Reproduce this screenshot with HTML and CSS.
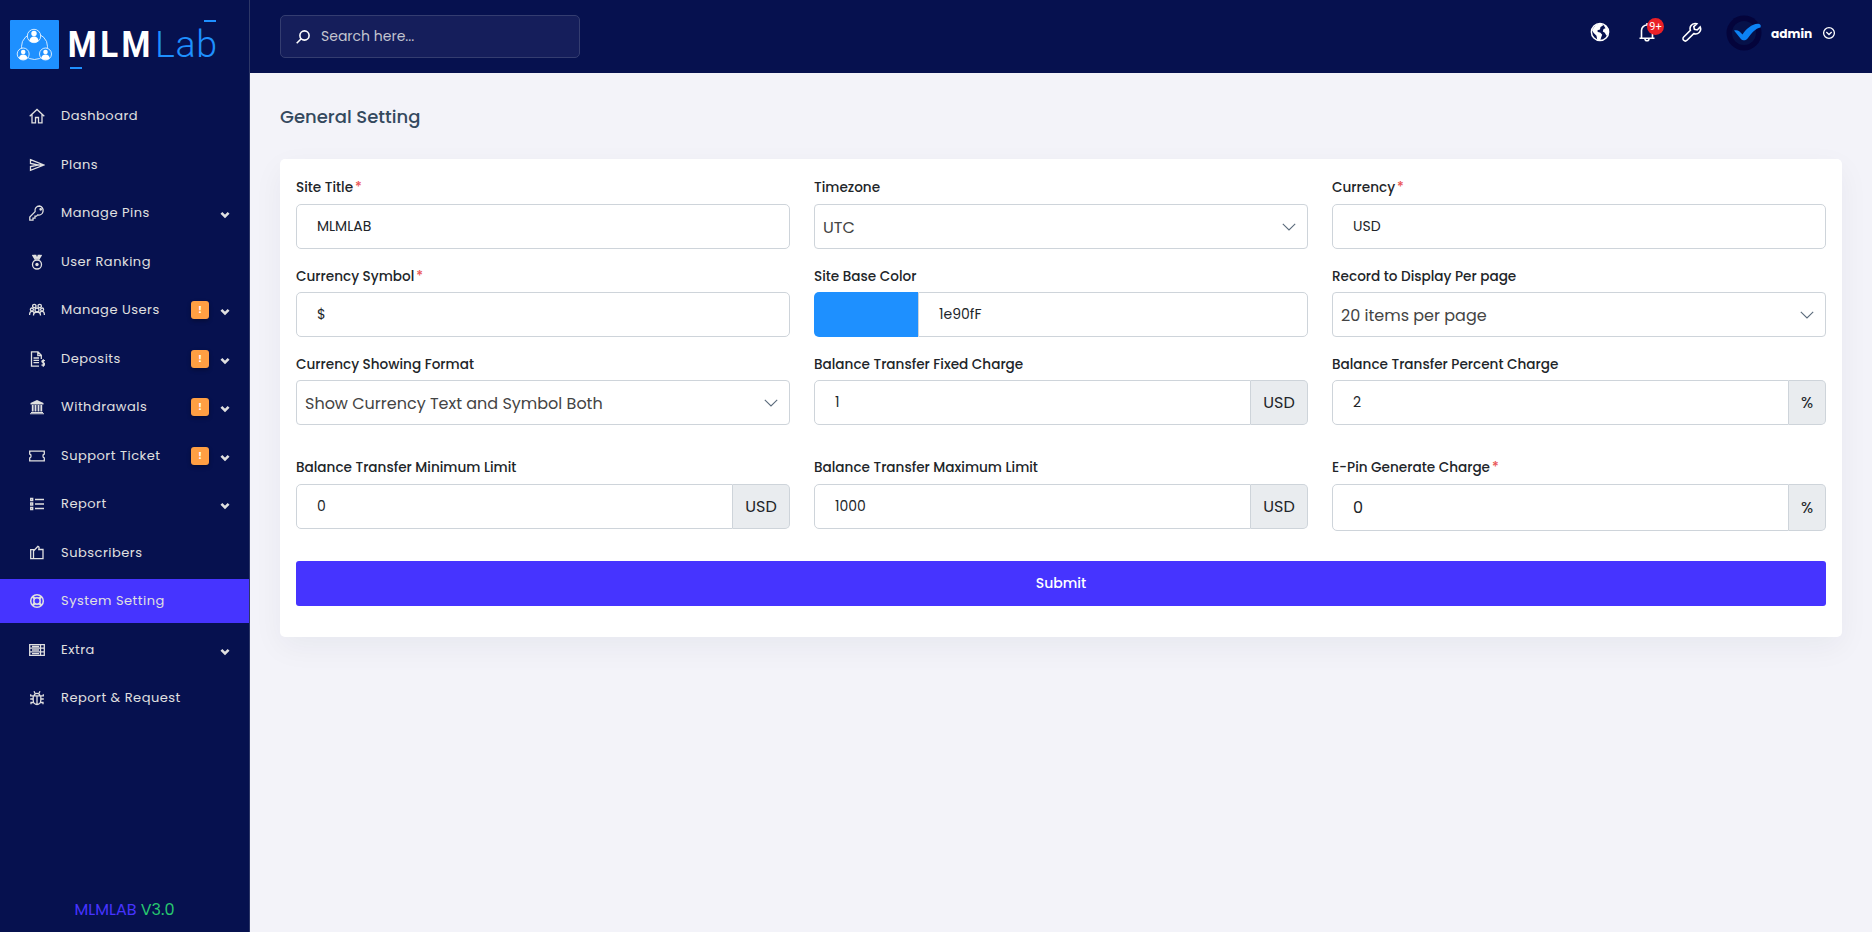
FILE: index.html
```
<!DOCTYPE html>
<html lang="en">
<head>
    <meta charset="UTF-8">
    <title>MLMLab - General Setting</title>
    <link rel="stylesheet" href="styles.css">
</head>
<body>
<svg class="sprite" aria-hidden="true">
    <symbol id="chevron" viewBox="0 0 10 8"><path d="M1.4 1.9 5 5.5l3.6-3.6" fill="none" stroke="currentColor" stroke-width="2.6"/></symbol>
    <symbol id="arrow" viewBox="0 0 14 8"><path d="M.8.8 7 7 13.2.8" fill="none" stroke="currentColor" stroke-width="1.1"/></symbol>
</svg>

<aside class="sidebar">
    <a class="logo" href="#">
        <svg width="210" height="52" viewBox="0 0 210 52">
            <rect x="0" y="2" width="49" height="49" rx="1" fill="#1e90ff"/>
            <g fill="none" stroke="#fff" stroke-width=".8">
                <circle cx="24.5" cy="28.5" r="13"/>
                <circle cx="24" cy="18" r="6.7" fill="#1e90ff"/>
                <circle cx="13.2" cy="36" r="6" fill="#1e90ff"/>
                <circle cx="35.5" cy="36" r="6" fill="#1e90ff"/>
            </g>
            <g fill="#fff">
                <circle cx="24" cy="15.5" r="2.7"/><path d="M19.5 23c0-3 2-4.500 4.500-4.500s4.500 1.500 4.500 4.500c-2.500 2-6.500 2-9 0z"/>
                <circle cx="13.2" cy="34" r="2.3"/><path d="M9 40.500c0-2.700 2-4 4.200-4s4.200 1.300 4.200 4c-2.400 1.800-6 1.800-8.400 0z"/>
                <circle cx="35.5" cy="34" r="2.3"/><path d="M31.300 40.500c0-2.700 2-4 4.200-4s4.200 1.300 4.200 4c-2.400 1.800-6 1.800-8.400 0z"/>
            </g>
            <text class="logo-bold" transform="translate(57.8 39.3) scale(.88 1)">MLM</text>
            <text class="logo-thin" x="145" y="39.3" textLength="62" lengthAdjust="spacing">Lab</text>
            <path d="M194 2h12v2h-12zM60 49h12v2H60z" fill="#1e90ff"/>
        </svg>
    </a>
    <nav class="menu">
        <a class="menu-item" href="#">
            <svg class="icon" viewBox="0 0 16 16"><path d="M.7 8.200 8 1.500l7.300 6.700M3 6.500v8.300h3.500V9.500h3v5.300H13V6.500"/></svg>
            <span>Dashboard</span>
        </a>
        <a class="menu-item" href="#">
            <svg class="icon" viewBox="0 0 16 16"><path d="M1.500 2.700 14.800 8 1.500 13.300V9.500L9 8 1.500 6.500zM9 8h5"/></svg>
            <span>Plans</span>
        </a>
        <a class="menu-item" href="#">
            <svg class="icon" viewBox="0 0 16 16"><path d="M10.500 1a4.500 4.500 0 0 0-4.400 5.600L.8 12v3.200H4v-2h2v-2h1.500l1.200-1.300A4.500 4.500 0 1 0 10.500 1z"/><circle cx="11.7" cy="4.3" r=".7"/></svg>
            <span>Manage Pins</span>
            <svg class="chevron"><use href="#chevron"/></svg>
        </a>
        <a class="menu-item" href="#">
            <svg class="icon" viewBox="0 0 16 16"><path d="m3.500.8 3 5M6.500.8 8 5 9.500.8M12.500.8l-3 5M5 .8l2 4M11 .8l-2 4"/><circle cx="8" cy="10.5" r="4.5"/><circle class="solid" cx="8" cy="10.5" r="1.7"/></svg>
            <span>User Ranking</span>
        </a>
        <a class="menu-item" href="#">
            <svg class="icon" viewBox="0 0 16 16"><circle cx="5.3" cy="4" r="1.7"/><circle cx="10.7" cy="4" r="1.7"/><circle cx="2.9" cy="7.5" r="1.5"/><circle cx="13.1" cy="7.5" r="1.5"/><circle cx="8" cy="8" r="2"/><path d="M.6 13c0-2.500 1-3.700 2.300-3.700S5 10 5 11M15.400 13c0-2.500-1-3.700-2.300-3.700S11 10 11 11M4.500 13.500c0-2.500 1.500-3.500 3.500-3.500s3.500 1 3.500 3.500"/></svg>
            <span>Manage Users</span>
            <b class="alert">!</b>
            <svg class="chevron"><use href="#chevron"/></svg>
        </a>
        <a class="menu-item" href="#">
            <svg class="icon" viewBox="0 0 16 16"><path d="M10 15.200H2.500V.8H9L12.300 4.300V8M8.800.8v3.700h3.500M4.500 7h5.500M4.500 9.300H10M4.500 11.600H10"/><path d="M15.900 9.800c-1-.8-3-.6-3 .7 0 1.600 3 .9 3 2.600 0 1.300-2.200 1.500-3.400.6M14.300 8.300v7.500"/></svg>
            <span>Deposits</span>
            <b class="alert">!</b>
            <svg class="chevron"><use href="#chevron"/></svg>
        </a>
        <a class="menu-item" href="#">
            <svg class="icon" viewBox="0 0 16 16"><path class="solid" d="M8 1 1.500 4v1.500h13V4zM2 13h12v1H2zM1 14.300h14v1H1z"/><path d="M3.700 6v6.500M6.500 6v6.500M9.500 6v6.500M12.300 6v6.500" stroke-width="1.8"/></svg>
            <span>Withdrawals</span>
            <b class="alert">!</b>
            <svg class="chevron"><use href="#chevron"/></svg>
        </a>
        <a class="menu-item" href="#">
            <svg class="icon" viewBox="0 0 16 16"><path d="M.7 3.200h14.600V6C13.500 6.300 13.500 9.700 15.300 10v2.800H.7V10C2.500 9.700 2.500 6.300.7 6z"/></svg>
            <span>Support Ticket</span>
            <b class="alert">!</b>
            <svg class="chevron"><use href="#chevron"/></svg>
        </a>
        <a class="menu-item" href="#">
            <svg class="icon" viewBox="0 0 16 16"><path d="M1.700 2.500h2v2h-2zM1.700 7h2v2h-2zM1.700 11.500h2v2h-2zM6 3.500h9M6 8h9M6 12.500h9"/></svg>
            <span>Report</span>
            <svg class="chevron"><use href="#chevron"/></svg>
        </a>
        <a class="menu-item" href="#">
            <svg class="icon" viewBox="0 0 16 16"><path d="M1.700 4.700h2.800v8.900H1.700zM4.500 6 9 1.300c1.300.3 1.200 1.500.8 3.200h4.200v9.100H4.500"/></svg>
            <span>Subscribers</span>
        </a>
        <a class="menu-item active" href="#">
            <svg class="icon" viewBox="0 0 16 16"><circle cx="8" cy="8" r="6.3" stroke-width="1.5"/><circle cx="8" cy="8" r="3.2" stroke-width="1.5"/><path d="m3.500 3.500 2.200 2.200M12.500 3.500l-2.200 2.200M3.500 12.500l2.200-2.200M12.500 12.500l-2.200-2.200" stroke-width="2.4"/></svg>
            <span>System Setting</span>
        </a>
        <a class="menu-item" href="#">
            <svg class="icon" viewBox="0 0 16 16"><path d="M.7 2.700h14.600v10.600H.7zM.7 6.200h14.600M.7 9.800h14.600M3 4.500h7M3 8h7M3 11.600h7M11.500 2.700v10.600"/></svg>
            <span>Extra</span>
            <svg class="chevron"><use href="#chevron"/></svg>
        </a>
        <a class="menu-item" href="#">
            <svg class="icon" viewBox="0 0 16 16"><path d="M4.200 5.800h7.600v4.500a3.800 4.200 0 0 1-7.600 0zM5.200 5.800C5 2.500 11 2.500 10.800 5.800M5 1.200l1 2M11 1.200l-1 2M8 6v8M1.200 9h3M11.800 9h3M1.700 4.200v1.600h2.500M14.300 4.200v1.600h-2.500M2 14.200v-1.700h2.800M14 14.200v-1.700h-2.800"/></svg>
            <span>Report &amp; Request</span>
        </a>
    </nav>
    <div class="version"><span>MLMLAB</span> <span class="number">V3.0</span></div>
</aside>

<div class="page">
    <header class="topbar">
        <div class="search">
            <svg viewBox="0 0 14 14"><circle cx="8.5" cy="5.5" r="4.6"/><path d="M5.200 8.800.7 13.300"/></svg>
            <span>Search here...</span>
        </div>
        <div class="tools">
            <svg class="globe" viewBox="0 0 20 20"><circle cx="10" cy="10" r="8.6" fill="none" stroke="currentColor" stroke-width="1.5"/><path fill="currentColor" d="M6 2.500 12 1.300l1 2.200-2.500 1.500-.5 2.500-2.500.8.200 1.700 2.500.5 2 2.200-1 2.500-1 3.600-3-1.100-.7-4-3-3L2 8zM13.500 3l3 1.500L18.500 9v3l-2 1.700-1.700-3-2-1.200.7-2.500 2-.7z"/></svg>
            <div class="bell">
                <svg viewBox="0 0 20 20"><path d="M2.500 16.200h15M4.500 16V8.500a5.500 5.500 0 0 1 11 0V16M8 16.800a2 2 0 0 0 4 0M10 1v2"/></svg>
                <span class="count">9+</span>
            </div>
            <svg class="wrench" viewBox="0 0 20 20"><path d="M13 1.500a5 5 0 0 0-4.600 6.800L1.700 15a2.300 2.300 0 0 0 3.300 3.300l6.700-6.700A5 5 0 0 0 18.200 5l-3 3-2.800-.6-.6-2.800 3-2.800A5 5 0 0 0 13 1.500z"/></svg>
            <div class="user">
                <svg class="avatar" viewBox="0 0 36 36"><circle cx="18" cy="18" r="17.5" fill="#04043b"/><circle cx="18" cy="18" r="12" fill="#061149"/><path d="M8 15.500c3-1 5.500 0 8.500 4 3.500-5.500 10-11.200 16-10.700 2 .2 2.800 1.800 2 3.700-5 1-9 5.500-12.500 10.500-2 2.700-5 3.200-7.300.8z" fill="#0c82f4"/></svg>
                <span class="name">admin</span>
                <svg class="caret" viewBox="0 0 14 14"><circle cx="7" cy="7" r="5.4"/><path d="M4.300 6 7 8.500 9.700 6"/></svg>
            </div>
        </div>
    </header>

    <main class="content">
        <h1 class="title">General Setting</h1>
        <form class="card">
            <div class="row">
                <div class="field">
                    <label>Site Title<i>*</i></label>
                    <div class="control">MLMLAB</div>
                </div>
                <div class="field">
                    <label>Timezone</label>
                    <div class="control select">UTC<svg><use href="#arrow"/></svg></div>
                </div>
                <div class="field">
                    <label>Currency<i>*</i></label>
                    <div class="control">USD</div>
                </div>
            </div>
            <div class="row">
                <div class="field">
                    <label>Currency Symbol<i>*</i></label>
                    <div class="control">$</div>
                </div>
                <div class="field">
                    <label>Site Base Color</label>
                    <div class="group">
                        <div class="swatch"></div>
                        <div class="control">1e90fF</div>
                    </div>
                </div>
                <div class="field">
                    <label>Record to Display Per page</label>
                    <div class="control select">20 items per page<svg><use href="#arrow"/></svg></div>
                </div>
            </div>
            <div class="row">
                <div class="field">
                    <label>Currency Showing Format</label>
                    <div class="control select">Show Currency Text and Symbol Both<svg><use href="#arrow"/></svg></div>
                </div>
                <div class="field">
                    <label>Balance Transfer Fixed Charge</label>
                    <div class="group">
                        <div class="control">1</div>
                        <div class="addon">USD</div>
                    </div>
                </div>
                <div class="field">
                    <label>Balance Transfer Percent Charge</label>
                    <div class="group">
                        <div class="control">2</div>
                        <div class="addon percent">%</div>
                    </div>
                </div>
            </div>
            <div class="row limits">
                <div class="field">
                    <label>Balance Transfer Minimum Limit</label>
                    <div class="group">
                        <div class="control">0</div>
                        <div class="addon">USD</div>
                    </div>
                </div>
                <div class="field">
                    <label>Balance Transfer Maximum Limit</label>
                    <div class="group">
                        <div class="control">1000</div>
                        <div class="addon">USD</div>
                    </div>
                </div>
                <div class="field">
                    <label>E-Pin Generate Charge<i>*</i></label>
                    <div class="group tall">
                        <div class="control">0</div>
                        <div class="addon percent">%</div>
                    </div>
                </div>
            </div>
            <button class="submit" type="button">Submit</button>
        </form>
    </main>
</div>
</body>
</html>
```
FILE: styles.css
```
* {
    box-sizing: border-box;
}

body {
    display: flex;
    height: 100vh;
    margin: 0;
    overflow: hidden;
    background: #f3f3f9;
    color: #212529;
    font-family: Poppins, Inter, sans-serif;
    font-size: 14px;
}

a {
    color: inherit;
    text-decoration: none;
}

.sprite {
    position: absolute;
    width: 0;
    height: 0;
}

/* sidebar */
.sidebar {
    display: flex;
    flex-direction: column;
    width: 250px;
    flex: none;
    border-right: 1px solid #2d3767;
    background: #06114f;
}

.logo {
    height: 94px;
    padding: 18px 0 0 10px;
}

.logo text {
    font-family: Roboto, sans-serif;
    font-size: 37.5px;
}

.logo-bold {
    font-weight: 700;
    letter-spacing: 4px;
    fill: #fff;
}

.logo-thin {
    font-weight: 300;
    fill: #1e90ff;
}

.menu {
    display: flex;
    flex-direction: column;
    gap: 4.5px;
}

.menu-item {
    display: flex;
    align-items: center;
    height: 44px;
    padding: 0 19px 0 29px;
    color: #e0e0e0;
    font-size: 13px;
    letter-spacing: .5px;
}

.menu-item span {
    flex: 1;
}

.active {
    background: #4634ff;
}

.icon {
    width: 16px;
    height: 16px;
    margin-right: 16px;
    fill: none;
    stroke: currentColor;
    stroke-width: 1.3;
}

.icon .solid {
    fill: currentColor;
    stroke: none;
}

.chevron {
    width: 10px;
    height: 8px;
    margin-top: 4px;
}

.alert {
    width: 18px;
    height: 18px;
    margin-right: 11px;
    border-radius: 3px;
    background: #ff9f43;
    box-shadow: 0 2px 4px rgba(0, 0, 0, .3);
    color: #fff;
    font-size: 9px;
    line-height: 18px;
    text-align: center;
    letter-spacing: 0;
}

.version {
    margin-top: auto;
    padding-bottom: 11px;
    color: #4634ff;
    font-size: 16px;
    line-height: 22px;
    text-align: center;
}

.number {
    color: #28c76f;
}

/* top bar */
.page {
    flex: 1;
}

.topbar {
    display: flex;
    justify-content: space-between;
    height: 73px;
    padding: 15px 36px 0 30px;
    background: #06114f;
    color: #fff;
}

.search {
    display: flex;
    align-items: center;
    gap: 11px;
    width: 300px;
    height: 43px;
    padding: 0 15px;
    border: 1px solid #343d70;
    border-radius: 5px;
    background: #151e5b;
    color: #c3c5d0;
}

.search svg {
    width: 14px;
    height: 14px;
    fill: none;
    stroke: #fff;
    stroke-width: 1.6;
}

.tools {
    display: flex;
    align-items: center;
    height: 36px;
}

.globe {
    width: 20px;
    height: 20px;
    margin: 0 27px 2px 0;
}

.bell {
    position: relative;
    height: 22px;
    margin-right: 25px;
}

.bell svg,
.wrench {
    width: 20px;
    height: 20px;
    fill: none;
    stroke: #fff;
    stroke-width: 1.6;
}

.count {
    position: absolute;
    top: -4px;
    left: 10px;
    width: 17px;
    height: 17px;
    border-radius: 50%;
    background: #ea2027;
    font-family: Roboto, sans-serif;
    font-size: 11px;
    line-height: 17px;
    text-align: center;
}

.wrench {
    margin: 0 24px 2px 0;
}

.user {
    display: flex;
    align-items: center;
}

.avatar {
    width: 36px;
    height: 36px;
}

.name {
    width: 50px;
    padding: 1px 0 0 9px;
    font-size: 12.2px;
    font-weight: 700;
}

.caret {
    width: 14px;
    height: 14px;
    margin-left: 10px;
    fill: none;
    stroke: #fff;
    stroke-width: 1.3;
}

/* settings form */
.content {
    padding: 30px 30px 0;
}

.title {
    margin: 0 0 28px;
    color: #34495e;
    font-size: 18px;
    font-weight: 500;
    line-height: 28px;
}

.card {
    height: 478px;
    padding: 18px 16px 0;
    border-radius: 5px;
    background: #fff;
    box-shadow: 0 10px 30px rgba(18, 38, 63, .05);
}

.row {
    display: grid;
    grid-template-columns: repeat(3, 1fr);
    gap: 24px;
    margin-bottom: 16px;
}

label {
    display: block;
    margin-bottom: 6px;
    font-size: 13.6px;
    font-weight: 500;
    line-height: 21px;
}

.row + .row:not(.limits) label {
    margin-bottom: 5px;
    padding-top: 1px;
}

label i {
    margin-left: 2px;
    color: #ea5455;
    font-style: normal;
}

.control {
    display: flex;
    flex: 1;
    align-items: center;
    height: 45px;
    padding: 0 20px;
    border: 1px solid #ced4da;
    border-radius: 5px;
}

.select {
    justify-content: space-between;
    padding: 1px 11px 0 8px;
    border-radius: 4px;
    color: #444;
    font-size: 16px;
}

.select svg {
    width: 14px;
    height: 8px;
    color: #5b6b7c;
}

.group {
    display: flex;
}

.group .control {
    border-top-right-radius: 0;
    border-bottom-right-radius: 0;
}

.group .swatch + .control {
    border-radius: 0 5px 5px 0;
}

.swatch {
    width: 104px;
    border-radius: 5px 0 0 5px;
    background: #1e90ff;
}

.addon {
    display: flex;
    align-items: center;
    justify-content: center;
    width: 57px;
    border: 1px solid #ced4da;
    border-left: 0;
    border-radius: 0 5px 5px 0;
    background: #e9ecef;
    font-size: 16px;
}

.percent {
    width: 37px;
}

.limits {
    margin: 32px 0 30px;
}

.limits .addon {
    padding-bottom: 1px;
}

.tall .control {
    height: 47px;
    font-size: 16px;
}

.submit {
    display: block;
    width: 100%;
    height: 45px;
    border: 0;
    border-radius: 3px;
    background: #4634ff;
    color: #fff;
    font: 500 14px Poppins, Inter, sans-serif;
}
```
